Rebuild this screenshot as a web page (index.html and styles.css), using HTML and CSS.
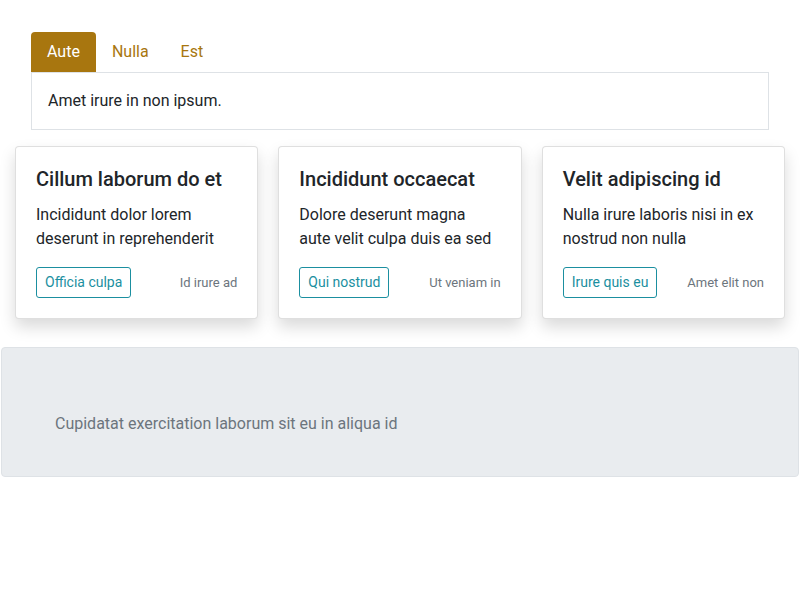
FILE: index.html
```html
<!DOCTYPE html>
<html>
<head>
<meta charset="utf-8">
<link rel="stylesheet" href="styles.css">
</head>
<body>
  <section class="tabs-wrap">
    <nav class="tabs">
      <span class="tab active">Aute</span>
      <span class="tab">Nulla</span>
      <span class="tab">Est</span>
    </nav>
    <div class="tab-pane">Amet irure in non ipsum.</div>
  </section>
  <section class="cards">
    <article class="card">
      <h3 class="card-title">Cillum laborum do et</h3>
      <p class="card-text">Incididunt dolor lorem deserunt in reprehenderit</p>
      <div class="card-foot">
        <button class="btn">Officia culpa</button>
        <span class="muted">Id irure ad</span>
      </div>
    </article>
    <article class="card">
      <h3 class="card-title">Incididunt occaecat</h3>
      <p class="card-text">Dolore deserunt magna aute velit culpa duis ea sed</p>
      <div class="card-foot">
        <button class="btn">Qui nostrud</button>
        <span class="muted">Ut veniam in</span>
      </div>
    </article>
    <article class="card">
      <h3 class="card-title">Velit adipiscing id</h3>
      <p class="card-text">Nulla irure laboris nisi in ex nostrud non nulla</p>
      <div class="card-foot">
        <button class="btn">Irure quis eu</button>
        <span class="muted">Amet elit non</span>
      </div>
    </article>
  </section>
  <section class="jumbo">
    <p class="jumbo-text">Cupidatat exercitation laborum sit eu in aliqua id</p>
  </section>
</body>
</html>
```

FILE: styles.css
```css
* { box-sizing: border-box; }
body {
  margin: 0;
  font-family: Roboto, "Noto Sans", sans-serif;
  font-size: 16px;
  line-height: 24px;
  color: #212529;
  background: #fff;
}
.tabs-wrap { margin: 32px 31px 0 31px; }
.tabs { display: flex; }
.tab {
  padding: 8px 16px;
  color: #a8760f;
  border-radius: 4px 4px 0 0;
}
.tab.active { background: #a8760f; color: #fff; }
.tab-pane {
  border: 1px solid #dee2e6;
  padding: 16px;
}
.cards {
  display: grid;
  grid-template-columns: repeat(3, 1fr);
  gap: 20px;
  padding: 0 15px;
  margin-top: 16px;
}
.card {
  background: #fff;
  border: 1px solid rgba(0,0,0,.125);
  border-radius: 4px;
  padding: 20px;
  box-shadow: 0 8px 16px rgba(0,0,0,.15);
}
.card-title {
  margin: 0 0 12px;
  font-size: 20px;
  line-height: 24px;
  font-weight: 500;
}
.card-text { margin: 0 0 16px; }
.card-foot {
  display: flex;
  justify-content: space-between;
  align-items: center;
}
.btn {
  font: inherit;
  font-size: 14px;
  line-height: 21px;
  padding: 4px 8px;
  color: #1b8fa0;
  background: transparent;
  border: 1px solid #1b8fa0;
  border-radius: 3px;
}
.muted { font-size: 13px; color: #6c757d; }
.jumbo {
  margin: 28px 1px 0 1px;
  background: #e9ecef;
  border: 1px solid #dee2e6;
  border-radius: 4px;
  padding: 64px 53px 40px;
}
.jumbo-text { margin: 0; color: #6c757d; }
```
